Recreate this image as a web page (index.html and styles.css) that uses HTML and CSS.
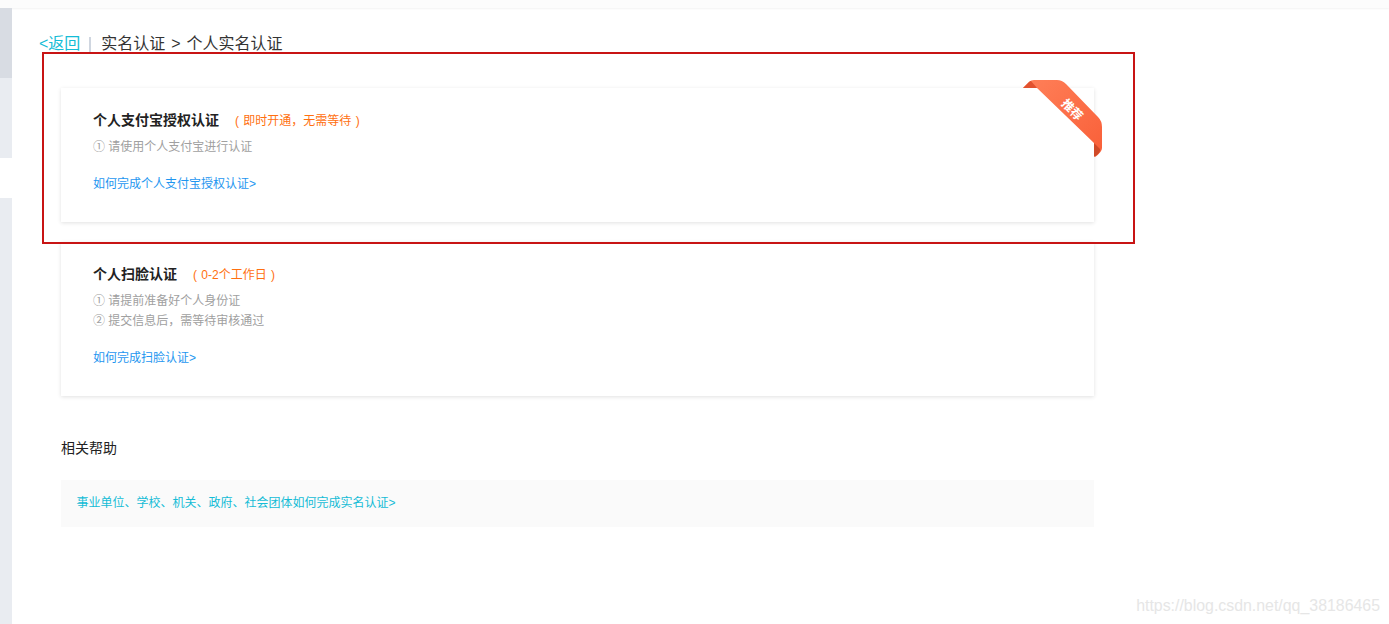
FILE: index.html
```html
<!DOCTYPE html>
<html lang="zh-CN">
<head>
  <meta charset="UTF-8" />
  <title>个人实名认证</title>
  <link rel="stylesheet" href="styles.css">
</head>
<body>
  <div class="topbar"></div>
  <div class="layout">
    <div class="sidebar">
      <div class="side-active"></div>
      <div class="side-item"></div>
      <div class="side-gap"></div>
      <div class="side-rest"></div>
    </div>

    <div class="main">
      <div class="crumbs">
        <a class="back">&lt;返回</a>
        <span class="sep"></span>
        <span class="path">实名认证 &gt; 个人实名认证</span>
      </div>

      <div class="card card-first">
        <h3>个人支付宝授权认证<span class="note">( 即时开通，无需等待 )</span></h3>
        <p class="step">① 请使用个人支付宝进行认证</p>
        <a class="how">如何完成个人支付宝授权认证&gt;</a>
        <div class="ribbon">
          <svg width="80" height="80" viewBox="0 0 80 80">
            <defs>
              <linearGradient id="ribbonFill" x1="0" y1="0" x2="1" y2="1">
                <stop offset="0" stop-color="#ff8059" />
                <stop offset="1" stop-color="#f95f38" />
              </linearGradient>
            </defs>
            <path d="M1 8 L7 2 Q9 0 12 0 L35 0 Q40 0 44 4 L76 37 Q80 41 80 47 L80 68 Q80 72 73 77 L72 63 L15 8 Z" fill="url(#ribbonFill)" />
            <path d="M1 8 L7 2 Q8 1 9 1 L15 8 Z" fill="#e2522f" />
            <path d="M72 63 L78 69 L78 71 Q77 74 72 77 Z" fill="#cf4a28" />
          </svg>
          <span class="ribbon-text">推荐</span>
        </div>
      </div>

      <div class="card card-second">
        <h3>个人扫脸认证<span class="note">( 0-2个工作日 )</span></h3>
        <p class="step">① 请提前准备好个人身份证</p>
        <p class="step">② 提交信息后，需等待审核通过</p>
        <a class="how">如何完成扫脸认证&gt;</a>
      </div>

      <div class="help-title">相关帮助</div>
      <div class="help-box">
        <a>事业单位、学校、机关、政府、社会团体如何完成实名认证&gt;</a>
      </div>
    </div>
  </div>

  <div class="red-box"></div>
  <div class="watermark">https://blog.csdn.net/qq_38186465</div>
</body>
</html>
```

FILE: styles.css
```css
html, body {
  height: 100%;
}

body {
  margin: 0;
  overflow: hidden;
  background: #fff;
  font-family: "Liberation Sans", "Noto Sans CJK SC", sans-serif;
  font-size: 12px;
  color: #333;
}

.topbar {
  height: 8px;
  background: #fcfcfc;
  box-shadow: 0 1px 2px rgba(0,0,0,0.05);
}

.layout {
  display: flex;
  height: 616px;
}

.sidebar {
  width: 12px;
  flex: none;
  display: flex;
  flex-direction: column;
}

.side-active {
  height: 70px;
  background: #d8dce3;
}

.side-item {
  height: 80px;
  background: #e9ecf1;
}

.side-gap {
  height: 40px;
  background: #fff;
}

.side-rest {
  flex: 1;
  background: #e9ecf1;
}

.main {
  width: 1033px;
  margin-left: 49px;
}

.crumbs {
  display: flex;
  align-items: center;
  height: 20px;
  margin: 26px 0 0 -22px;
  width: 400px;
  font-size: 16px;
  line-height: 20px;
}

.back {
  color: #14bcd6;
}

.sep {
  width: 2px;
  height: 15px;
  margin: 0 10px 0 9px;
  background: #cfd6e0;
}

.path {
  color: #333;
  word-spacing: 1.5px;
}

.card {
  position: relative;
  background: #fff;
  box-shadow: 0 1px 4px rgba(0,0,0,0.12);
  padding-left: 32px;
}

.card-first {
  height: 134px;
  margin-top: 34px;
  padding-top: 22px;
  box-sizing: border-box;
}

.card-second {
  height: 154px;
  margin-top: 20px;
  padding-top: 22px;
  box-sizing: border-box;
}

h3 {
  margin: 0 0 6px;
  font-size: 14px;
  line-height: 20px;
  font-weight: bold;
  color: #222;
}

.note {
  margin-left: 16px;
  font-size: 12px;
  font-weight: normal;
  word-spacing: 1px;
  color: #ff7010;
}

.step {
  margin: 0;
  font-size: 12px;
  line-height: 20px;
  color: #a0a0a0;
}

.how {
  display: block;
  margin-top: 17px;
  line-height: 20px;
  color: #1e96f0;
}

.ribbon {
  position: absolute;
  top: -8px;
  right: -8px;
  width: 80px;
  height: 80px;
}

.ribbon svg {
  display: block;
}

.ribbon-text {
  position: absolute;
  top: 21px;
  left: 38px;
  font-size: 12px;
  line-height: 18px;
  font-weight: bold;
  color: #fff;
  transform: rotate(45deg);
}

.help-title {
  margin-top: 42px;
  font-size: 14px;
  line-height: 20px;
  color: #222;
}

.help-box {
  margin-top: 22px;
  height: 47px;
  padding-left: 15.5px;
  background: #fafafa;
  font-size: 12px;
  line-height: 47px;
  color: #14bcd6;
}

.red-box {
  position: absolute;
  left: 42px;
  top: 52px;
  width: 1089px;
  height: 188px;
  border: 2px solid #c81414;
}

.watermark {
  position: absolute;
  right: 9px;
  top: 596px;
  font-size: 15.9px;
  line-height: 20px;
  color: #e6e6e6;
}
```
